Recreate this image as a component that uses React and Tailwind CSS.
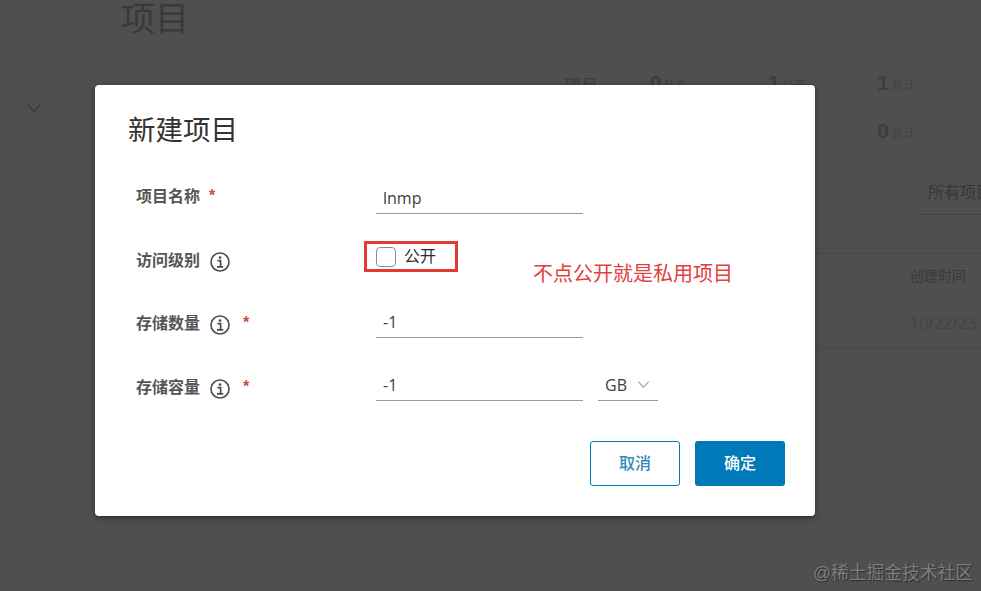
import React from 'react';

const cjk = "font-['Liberation_Sans','Noto_Sans_CJK_SC',sans-serif]";
const latin = "font-['Open_Sans','Noto_Sans_CJK_SC',sans-serif]";

// icono de información junto a las etiquetas
const InfoIcon = () => (
  <svg width="20" height="20" viewBox="0 0 20 20" fill="none" stroke="#4a4a4a" className="shrink-0">
    <circle cx="10" cy="10" r="9" strokeWidth="1.6" />
    <circle cx="10" cy="5.6" r="1.3" fill="#4a4a4a" stroke="none" />
    <path d="M7.4 8.7H10.6V14.6M7 14.8H13.2" strokeWidth="1.7" />
  </svg>
);

const Chevron = ({ color, size = 14 }) => (
  <svg width={size} height={size} viewBox="0 0 14 14" fill="none" stroke={color} strokeWidth="1.3">
    <path d="M1.5 4L7 10L12.5 4" />
  </svg>
);

const Star = () => <span className="text-[16px] font-bold leading-none text-[#c9503c]">*</span>;

const Stat = ({ num, label, className }) => (
  <div className={`flex items-end whitespace-nowrap text-[#3d3d3d] ${className}`}>
    <span className="text-[21px] font-bold leading-[22px]">{num}</span>
    <span className="ml-[2px] text-[12px] leading-[16px] text-[#414141]">{label}</span>
  </div>
);

// Página atenuada detrás del diálogo
const Backdrop = () => (
  <div className="h-full w-full bg-[#4f4f4f] text-[#3d3d3d]">
    <div className="h-[40px] pl-[121px] text-[34px] leading-[38px] text-[#393939]">项目</div>
    <div className="flex h-[133px] pl-[26px] pt-[60px]">
      <Chevron color="#3b3b3b" size={16} />
      <div className="ml-[522px] mt-[-24px] w-[86px] text-[17px] leading-[22px]">项目</div>
      <Stat num="0" label="私有" className="mt-[-28px] h-[22px] w-[118px]" />
      <Stat num="1" label="公开" className="mt-[-28px] h-[22px] w-[115px]" />
      <div className="mt-[-28px] flex w-[32px] flex-col items-end gap-[26px]">
        <Stat num="1" label="总计" className="h-[22px]" />
        <Stat num="0" label="总计" className="h-[22px]" />
      </div>
      <div className="ml-[31px] mt-[-35px] h-[62px] border-l border-[#484848]" />
    </div>
    <div className="flex h-[80px] justify-end">
      <div className="mt-[7px] h-[35px] w-[61px] overflow-hidden whitespace-nowrap border-b border-[#414141] pl-[8px] text-[16px] leading-[26px] text-[#363636]">
        所有项目
      </div>
    </div>
    <div className="ml-[815px] h-[95px] border-y border-[#484848] pl-[95px]">
      <div className="pt-[13px] text-[14px] leading-[18px] text-[#393939]">创建时间</div>
      <div className={`whitespace-nowrap pt-[26px] text-[16px] leading-[24px] text-[#434343] ${latin}`}>10/22/23,</div>
    </div>
  </div>
);

const FormRow = ({ label, info, required, children }) => (
  <div className="flex h-[63.7px] items-center">
    <div className="flex w-[240px] items-center text-[16px] font-bold text-[#565656]">
      <span className="w-[64px] whitespace-nowrap">{label}</span>
      {info && (
        <span className="ml-[10px] mt-[2px]">
          <InfoIcon />
        </span>
      )}
      {required && (
        <span className={info ? 'ml-[13px] mb-[2px]' : 'ml-[9px] mb-[2px]'}>
          <Star />
        </span>
      )}
    </div>
    {children}
  </div>
);

const TextInput = ({ value, className }) => (
  <div className={`h-[32px] w-[207px] border-b border-[#9a9a9a] pl-[7px] text-[16px] leading-[32px] text-[#3c3c3c] ${latin} ${className}`}>
    {value}
  </div>
);

export default function App() {
  return (
    <div className={`relative h-[591px] w-[981px] overflow-hidden ${cjk}`}>
      <Backdrop />

      {/* Diálogo */}
      <div className="absolute left-[95px] top-[85px] flex h-[431px] w-[720px] flex-col rounded-[4px] bg-white pl-[41px] shadow-[0_2px_6px_rgba(0,0,0,0.45)]">
        <h3 className="-ml-[8px] mt-[28px] h-[52px] text-[27.5px] leading-[36px] text-[#333333]">新建项目</h3>

        <FormRow label="项目名称" required>
          <TextInput value="lnmp" className="mt-[3px]" />
        </FormRow>

        <FormRow label="访问级别" info>
          <div className="-ml-[12px] mt-[-8px] flex h-[31px] w-[94px] items-center border-[3px] border-[#e53935] pl-[9px]">
            <span className="h-[20px] w-[20px] rounded-[4px] border border-[#8c8c8c] bg-white" />
            <span className="ml-[8px] text-[16px] text-[#2b2b2b]">公开</span>
          </div>
          <span className="ml-[75px] mt-[27px] whitespace-nowrap text-[20px] leading-[28px] text-[#e2403b]">
            不点公开就是私用项目
          </span>
        </FormRow>

        <FormRow label="存储数量" info required>
          <TextInput value="-1" className="mt-[-5px]" />
        </FormRow>

        <FormRow label="存储容量" info required>
          <TextInput value="-1" className="mt-[-5px]" />
          <div className={`ml-[15px] mt-[-5px] flex h-[32px] w-[60px] items-center border-b border-[#9a9a9a] pl-[7px] text-[16px] text-[#3c3c3c] ${latin}`}>
            GB
            <span className="ml-[10px]">
              <Chevron color="#a3a3a3" size={13} />
            </span>
          </div>
        </FormRow>

        <div className="mt-[21px] flex justify-end gap-[15px] pr-[30px]">
          <button className="h-[45px] w-[90px] rounded-[3px] border border-[#0079b8] bg-white pt-[1px] text-[16px] font-medium text-[#2f8ab8]">
            取消
          </button>
          <button className="h-[45px] w-[90px] rounded-[3px] bg-[#0079b8] pt-[1px] text-[16px] font-medium text-white">
            确定
          </button>
        </div>
      </div>

      {/* Marca de agua */}
      <div className="absolute bottom-[6px] right-[8px] whitespace-nowrap text-[17.75px] leading-[24px] text-[#7d7d7d] [text-shadow:1px_1px_1px_#2e2e2e]">
        @稀土掘金技术社区
      </div>
    </div>
  );
}
